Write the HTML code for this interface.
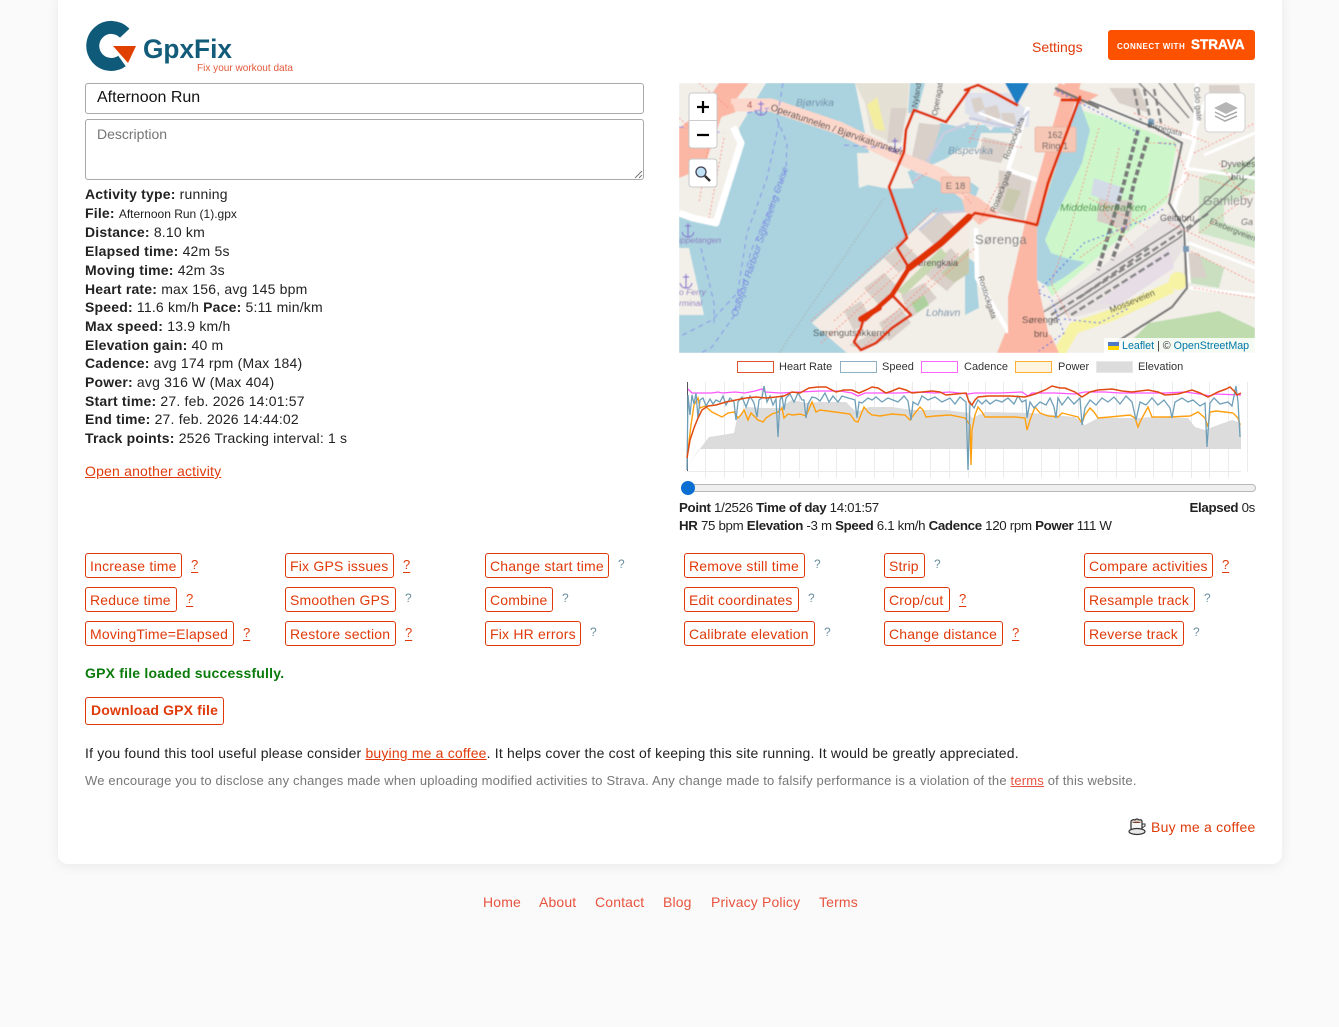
<!DOCTYPE html>
<html lang="en"><head><meta charset="utf-8"><title>GpxFix</title>
<style>
html,body{margin:0;padding:0;background:#fafafa}
body{width:1339px;height:1027px;position:relative;overflow:hidden;font-family:"Liberation Sans",Arial,sans-serif;font-size:14px;color:#222}
#card{position:absolute;left:58px;top:-10px;width:1224px;height:874px;background:#fff;border-radius:10px;box-shadow:0 2px 12px rgba(0,0,0,.07)}
.a{position:absolute;white-space:nowrap}
.inp{position:absolute;left:85px;width:559px;box-sizing:border-box;border:1px solid #a9a9a9;border-radius:3px;background:#fff}
#info{left:85px;top:185px;line-height:18.7px;letter-spacing:.19px}
#info b{color:#222}
.r{color:#e03a0a}
.btn{position:absolute;box-sizing:border-box;height:25px;border:1px solid #e03a0a;border-radius:3px;color:#e03a0a;line-height:24px;padding-left:4px;white-space:nowrap;letter-spacing:.2px;background:#fff}
.q{position:absolute;font-size:12px;line-height:14px;color:#6a8fa0}
.qr{position:absolute;font-size:13px;line-height:15px;color:#e03a0a;text-decoration:underline;text-underline-offset:3px}
.f{position:absolute;top:893px;color:#e8533f;line-height:18px;white-space:nowrap;letter-spacing:.15px}
.lg{position:absolute;top:361px;height:9.5px;width:35px;border-width:1.3px;border-style:solid}
.lt{position:absolute;top:360px;font-size:11px;line-height:14px;color:#333;white-space:nowrap}
.pt{left:679px;line-height:18px;font-size:13.3px;letter-spacing:-.32px}
</style></head><body>
<div id="card"></div>

<svg class="a" style="left:80px;top:15px" width="220" height="62" viewBox="80 15 220 62">
<path d="M124.700 33.200A18.500 18.500 0 1 0 122 61" fill="none" stroke="#0f5a78" stroke-width="13"/>
<path d="M113 46L136 46L128 63Z" fill="#e04000"/>
<text x="143" y="58" font-family="Liberation Sans,sans-serif" font-weight="bold" font-size="27" fill="#125c7a" textLength="89" lengthAdjust="spacingAndGlyphs">GpxFix</text>
<text x="197" y="71" font-family="Liberation Sans,sans-serif" font-size="10.5" fill="#e2593a" textLength="96" lengthAdjust="spacingAndGlyphs">Fix your workout data</text>
</svg>

<div class="a r" style="left:1032px;top:38px;line-height:18px">Settings</div>
<div class="a" style="left:1108px;top:30px;width:147px;height:30px;background:#fc5200;border-radius:3px"></div>
<div class="a" style="left:1117px;top:41px;font-size:8px;line-height:11px;font-weight:bold;color:#fff;letter-spacing:.5px">CONNECT WITH</div>
<div class="a" style="left:1191px;top:37px;font-size:13.5px;line-height:16px;font-weight:bold;color:#fff;-webkit-text-stroke:.4px #fff">STRAVA</div>

<div class="inp" style="top:83px;height:31px;padding-left:11px;font-size:16px;line-height:28px;color:#111">Afternoon Run</div>
<div class="inp" style="top:119px;height:61px;padding:5px 11px;line-height:18px;color:#757575">Description
<svg style="position:absolute;right:0;bottom:0" width="9" height="9"><path d="M1 8L8 1M5 8L8 5" stroke="#777" fill="none"/></svg></div>

<div class="a" id="info">
<b>Activity type:</b> running<br>
<b>File:</b> <span style="font-size:12px;letter-spacing:0">Afternoon Run (1).gpx</span><br>
<b>Distance:</b> 8.10 km<br>
<b>Elapsed time:</b> 42m 5s<br>
<b>Moving time:</b> 42m 3s<br>
<b>Heart rate:</b> max 156, avg 145 bpm<br>
<b>Speed:</b> 11.6 km/h <b>Pace:</b> 5:11 min/km<br>
<b>Max speed:</b> 13.9 km/h<br>
<b>Elevation gain:</b> 40 m<br>
<b>Cadence:</b> avg 174 rpm (Max 184)<br>
<b>Power:</b> avg 316 W (Max 404)<br>
<b>Start time:</b> 27. feb. 2026 14:01:57<br>
<b>End time:</b> 27. feb. 2026 14:44:02<br>
<b>Track points:</b> 2526 Tracking interval: 1 s
</div>
<div class="a r" style="left:85px;top:462px;line-height:18px;text-decoration:underline;letter-spacing:.19px">Open another activity</div>

<!-- MAP -->
<svg class="a" style="left:679px;top:83px" width="576" height="270" viewBox="0 0 576 270" font-family="Liberation Sans,sans-serif">
<defs><filter id="bl" x="0" y="0" width="100%" height="100%"><feGaussianBlur stdDeviation=".45"/></filter></defs>
<g filter="url(#bl)">
<rect width="576" height="270" fill="#f2efe9"/>
<!-- water -->
<path fill="#aad3df" d="M87 0L60 45L63 60L38 142L15 135L0 133V165H10L25 232H0V270H170L133 240L190 190L253 130H290L290 100L260 95L230 88L180 105L178 70L190 70L176 0Z"/>
<path fill="#aad3df" d="M231 0H246L238 30H229ZM262 40L310 50L322 35L330 45L348 60L320 75L308 80L303 65L282 65L268 75L230 92L240 55Z"/>
<path fill="#aad3df" d="M286 42H306L312 48L300 60L286 62ZM286 95L300 105L290 130L286 130ZM286 172L296 180L300 225L286 232Z"/>
<!-- beige/land blocks -->
<path fill="#f2efe9" d="M179 100L193 72L225 80L235 105L210 106Z"/>
<path fill="#e5e0d4" d="M176 0H230L228 30L214 60L192 50L186 20Z"/>
<path fill="#d9d0c9" d="M212 25H228L222 60H208Z"/>
<path fill="#f3ee9f" d="M188 22L198 14L206 48L196 46Z"/>
<path fill="#d9d0c9" d="M240 40L262 42L250 80L232 78Z"/>
<path fill="#dfe1eb" d="M286 10H330L350 30V44H310L286 30Z"/>
<!-- peninsula -->
<path fill="#f4ece4" d="M133 240L255 130L290 128V175L184 268L168 270Z"/>
<path fill="#d9d0c9" d="M240 147L262 130L280 148L258 165ZM205 175L225 160L240 175L220 190ZM185 205L205 190L220 205L200 222ZM245 190L272 165L290 185L268 208ZM222 212L245 200L258 215L232 235ZM200 240L222 225L232 240L210 258ZM165 228L182 218L192 235L175 248ZM170 262L195 250L210 255L185 267Z"/>
<path fill="#c8d8b0" d="M218 208L262 165L268 172L225 212Z"/>
<path fill="#add19e" d="M232 220L245 212L250 222L238 230Z"/>
<path fill="#c8c9ac" d="M262 190L290 165V190L275 200Z"/>
<!-- centre-east land -->
<path fill="#f2efe9" d="M302 50H350L345 135L325 200L300 240L300 100L290 90Z"/>
<path fill="#d9d0c9" d="M305 25L318 22L322 35L308 38ZM322 30L335 30L338 42L325 44ZM292 16L302 14L306 26L296 30ZM304 54L330 60L322 80L300 76ZM320 87L353 95L345 137L318 130Z"/>
<path fill="#c9c9af" d="M329 105L342 108L333 130L322 126Z"/>
<!-- park -->
<path fill="#cdf7cb" d="M404 28L499 54L488 118L443 154L400 190L373 213L360 190L370 100Z"/>
<!-- lake -->
<path fill="#aad3df" d="M399 14L411 47L403 80L386 114L373 140L366 157L372 170L390 176L406 179L386 194L369 204L358 197V144Z"/>
<!-- castle ruin -->
<path fill="#d5cdc6" d="M420 115L455 118L450 148L418 138Z"/>
<path fill="#d3dbe6" d="M415 95L445 105L440 122L412 112Z"/>
<!-- rail yard -->
<path fill="#e8e3e2" d="M493 127L509 157L493 184L433 224L396 234L363 227L419 187Z"/>
<path fill="#e6dde6" d="M455 190L490 165L495 185L440 222L420 220Z"/>
<!-- east land -->
<path fill="#cfe6c8" d="M520 95L576 75V165L520 150Z"/>
<path fill="#f2efe9" d="M545 120L576 110V150L545 140Z"/>
<path fill="#c9dfc0" d="M515 170L545 185L540 205L510 200Z"/>
<path fill="#bedcae" d="M440 270L470 240L540 228L576 245V270Z"/>
<path fill="#f2efe9" d="M408 0H576V60L520 90L499 60L410 25Z"/>
<path fill="#d9d0c9" d="M530 2H560L565 30L530 35ZM430 5H460L470 30L440 20ZM505 170H520L528 195H505Z"/>
<g fill="none" stroke="#6e6e6e" stroke-width="1.6" opacity=".8">
<path d="M460 0L500 40M480 0L510 35M495 0L515 30"/>
<path d="M363 230L499 144L576 74"/><path d="M372 238L500 155L576 88"/>
</g>
<g fill="none" stroke="#777" stroke-width="2.600" stroke-dasharray="7 3" opacity=".85">
<path d="M372 232L470 170L530 130"/><path d="M392 232L490 170"/><path d="M400 215L470 165"/><path d="M455 6L462 40M465 6L472 40M475 6L482 40"/>
</g>
<g fill="none" stroke="#7a7a7a" stroke-width="4" stroke-dasharray="6 2.500">
<path d="M459 47L445 100L430 150L419 187"/>
<path d="M469 54L455 100L445 145L433 177"/>
</g>
<!-- yellow road -->
<path fill="none" stroke="#f7f3a4" stroke-width="12" d="M380 270L395 245L433 232L493 204"/>
<circle cx="499" cy="198" r="9" fill="#f7f3a4"/>
<!-- white roads -->
<g fill="none" stroke="#fff" stroke-linejoin="round">
<path stroke-width="7" d="M54 44L62 60L37 140L14 135L0 130"/>
<path stroke-width="4" d="M400 14L476 45L512 55L530 10"/>
<path stroke-width="4.5" d="M349 24L329 87M329 87L358 97"/>
<path stroke-width="4" d="M518 0L515 60L495 125L505 145L510 200"/>
<path stroke-width="4.500" d="M297 145L298 195L330 250"/>
<path stroke-width="3" d="M525 72L576 50M505 85L576 95M510 160L576 185M510 205L576 212"/>
<path stroke-width="2.5" d="M300 30L340 45"/>
</g>
<g fill="none" stroke="#777" stroke-width="2.200"><path d="M400 14L476 45L503 60L490 120L505 145L508 205L493 224L436 260"/></g>
<path fill="none" stroke="#c9cde0" stroke-width="2.600" d="M235 100L265 50L290 40M240 147L260 130L290 128M290 35L335 45L350 28"/>
<!-- salmon roads -->
<path fill="#fbb7a4" d="M386 0L402 0L358 144L358 197L373 267L329 270L329 214L346 140Z"/>
<path fill="#fbb7a4" d="M0 95L25 85L42 35L70 0H40L20 30L0 45Z"/>
<path fill="#fbb7a4" d="M380 0L420 12L402 22L374 12Z"/>
<path fill="#fbb7a4" d="M326 250L372 252L380 270H318Z"/>
<path fill="#fbc9ba" d="M280 105L300 115L320 130L300 142L286 128Z"/>
<path fill="none" stroke="#fcd7cb" stroke-width="13" d="M52 22L92 22L160 45L228 78L262 92L288 112"/>
<path fill="none" stroke="#fbb7a4" stroke-width="9" d="M15 40L40 30L55 25"/>
<!-- rail -->
<path fill="none" stroke="#777" stroke-width="2.500" d="M376 5L420 25"/>
<!-- footways -->
<g fill="none" stroke="#fa8072" stroke-width="1" stroke-dasharray="2 2" opacity=".85">
<path d="M0 35L30 60L20 120M45 55L30 135M20 0L50 25"/>
<path d="M132 238L258 125M142 260L220 190M180 268L296 165M233 100L248 90M270 95L292 120M155 238L235 165M205 240L280 170"/>
<path d="M290 55L345 65M320 100L300 140M300 40L290 60M420 45L390 150L372 200L390 235M440 65L425 130L455 165M470 60L495 60L510 95L480 120L400 175M410 115L470 145"/>
<path d="M515 70L576 40M505 90L576 110M490 140L576 180M505 165L576 200M515 205L576 215M455 30L530 60M520 150L560 120M540 80L570 120"/>
</g>
<!-- blue routes -->
<g fill="none" stroke="#8890e8" stroke-width="1" stroke-dasharray="5 4">
<path d="M104 0L98 36L108 60L107 87L72 168L63 205L33 237L0 254M100 40L88 95L68 150L55 233L33 264L22 270M22 165L35 220V240"/>
<path d="M68 30L90 25M165 62L220 66M0 44L45 50"/>
</g>
<g fill="none" stroke="#4f6de0" stroke-width="1.2" stroke-dasharray="2 3">
<path d="M378 8L460 50M480 60L500 62M360 208L405 160L470 135L486 125M360 210L372 215L385 250L360 268M385 236L420 240L450 225"/>
</g>
<path fill="none" stroke="#aaa" stroke-width="1" stroke-dasharray="1.500 2" d="M205 115L100 270"/>
<rect x="469" y="36" width="6" height="6" fill="#7ba4c0"/><rect x="504" y="163" width="6" height="6" fill="#7a9bb5"/>
<!-- anchors -->
<g fill="none" stroke="#8875d0" stroke-width="1.200">
<path d="M82 18V32M79 21H85M76 27Q77 32 82 32Q87 32 88 27"/>
<path d="M216 55V69M213 58H219M210 64Q211 69 216 69Q221 69 222 64"/>
<path d="M9 140V154M6 143H12M3 149Q4 154 9 154Q14 154 15 149"/>
<path d="M7 191V205M4 194H10M1 200Q2 205 7 205Q12 205 13 200"/>
</g>
<!-- labels -->
<g font-size="10">
<text x="117" y="23" font-style="italic" fill="#6f8fa8" font-size="10.500">Bjørvika</text>
<text x="269" y="71" font-style="italic" fill="#6f8fa8" font-size="10.500">Bispevika</text>
<text x="247" y="233" font-style="italic" fill="#6f8fa8" font-size="10.500">Lohavn</text>
<text x="91" y="27" fill="#333" font-size="9.500" transform="rotate(19 91 27)">Operatunnelen / Bjørvikatunnelen</text>
<text x="0" y="160" font-style="italic" fill="#8a6fc0" font-size="8.500">ippetangen</text>
<text x="0" y="212" font-style="italic" fill="#8a6fc0" font-size="8.500">o Ferry</text>
<text x="0" y="223" font-style="italic" fill="#8a6fc0" font-size="8.500">rminal</text>
<text x="58" y="234" font-style="italic" fill="#6f7fe0" font-size="9.500" transform="rotate(-71 58 234)">Oslofjord Harbour Sightseeing Cruise</text>
<text x="233" y="183" fill="#333" font-size="9">Sørengkaia</text>
<text x="134" y="253" fill="#333" font-size="9.500">Sørengutstikkeren</text>
<text x="296" y="161" fill="#777" font-size="13" letter-spacing=".3">Sørenga</text>
<text x="381" y="128" font-style="italic" fill="#2e8b2e" font-size="10.500">Middelalderparken</text>
<text x="524" y="122" fill="#8a8a8a" font-size="12.500">Gamleby</text>
<text x="481" y="138" fill="#333" font-size="9">Geitabru</text>
<text x="343" y="240" fill="#333" font-size="9.500">Sørenga</text>
<text x="355" y="254" fill="#333" font-size="9.500">bru</text>
<text x="542" y="84" fill="#333" font-size="9">Dyvekes</text>
<text x="552" y="97" fill="#333" font-size="9">bru</text>
<text x="432" y="230" fill="#333" font-size="9" transform="rotate(-22 432 230)">Mosseveien</text>
<text x="468" y="44" fill="#333" font-size="8" transform="rotate(15 468 44)">Bispegata</text>
<text x="530" y="140" fill="#444" font-size="8" transform="rotate(22 530 140)">Ekebergveien</text>
<text x="329" y="77" fill="#333" font-size="8" transform="rotate(-68 329 77)">Rostockgata</text>
<text x="316" y="130" fill="#333" font-size="8" transform="rotate(-68 316 130)">Rostockgata</text>
<text x="299" y="194" fill="#333" font-size="8" transform="rotate(72 299 194)">Rostockgata</text>
<text x="238" y="25" fill="#333" font-size="8" transform="rotate(-80 238 25)">Nylandsveien</text>
<text x="258" y="33" fill="#333" font-size="8" transform="rotate(-80 258 33)">Operagata</text>
<text x="515" y="4" fill="#333" font-size="8" transform="rotate(85 515 4)">Oslo gate</text>
<text x="562" y="142" fill="#555" font-size="9" font-style="italic">Ga</text>
<text x="68" y="25" fill="#a33" font-size="9.500">4</text>
</g>
<g><rect x="262" y="94" width="29" height="16" rx="2" fill="#f7c7b6" stroke="#e9b1a0" stroke-width=".7"/><text x="276.500" y="106" text-anchor="middle" font-size="9.500" fill="#555">E 18</text></g>
<g><rect x="356" y="44" width="41" height="25" rx="2" fill="#f7c7b6" stroke="#e9b1a0" stroke-width=".7"/><text x="376" y="55" text-anchor="middle" font-size="9" fill="#555">162</text><text x="376" y="66" text-anchor="middle" font-size="9" fill="#555">Ring 1</text></g>
<!-- marker -->
<path d="M326 0H350L338 22Z" fill="#1f7fc4"/>
<!-- track -->
<g fill="none" stroke="#e03000" stroke-linejoin="round" stroke-linecap="round">
<path stroke-width="2.800" d="M286 7L299 2L316 10L338 22M383 17H401"/>
<path stroke-width="2.800" d="M290 7L267 39L235 27L227 47L225 69L210 104L228 155L218 165L230 185"/>
<path stroke-width="2.800" d="M213 212L232 232L213 245L197 260L182 267L175 259L182 245L184 238"/>
<path stroke-width="2.800" d="M286 139L296 130L346 139L358 142L369 100L401 14"/>
<path stroke-width="5" d="M186 236L213 212L230 185"/>
<path stroke-width="7" d="M230 185L262 160L290 134"/>
<path stroke-width="6" d="M182 236L200 225"/>
<path stroke-width="5" d="M280 142L290 135"/>
</g>
</g>
<!-- attribution -->
<rect x="425" y="255" width="151" height="15" fill="#fff" opacity=".85"/>
<rect x="429" y="259" width="11" height="4" fill="#4d78c8"/><rect x="429" y="263" width="11" height="4" fill="#ffd500"/>
<text x="443" y="266" font-size="10.700" fill="#333"><tspan fill="#0078a8">Leaflet</tspan> | © <tspan fill="#0078a8">OpenStreetMap</tspan></text>
<!-- controls -->
<rect x="10" y="10" width="28" height="55" rx="3" fill="#fff" stroke="#c8c8c8"/><path d="M10 37.500H38" stroke="#ccc"/>
<path d="M18 24H30M24 18V30M18 52H30" stroke="#000" stroke-width="2.200"/>
<rect x="10" y="76" width="28" height="28" rx="3" fill="#fff" stroke="#c8c8c8"/>
<circle cx="22" cy="89" r="5" fill="#bfe0f5" stroke="#445" stroke-width="1.300"/><path d="M26 93L31 98" stroke="#333" stroke-width="2.500"/>
<rect x="526" y="10" width="40" height="39" rx="4" fill="#fff" stroke="#d0d0d0"/>
<path d="M536 33L546 38L558 33M536 29L546 34L558 29" fill="none" stroke="#aaa" stroke-width="1.500"/>
<path d="M535 25L547 19L559 25L547 31Z" fill="#b5b5b5"/>
</svg>

<!-- legend -->
<div class="lg" style="left:737px;border-color:#e0532f;background:#fff"></div><div class="lt" style="left:779px">Heart Rate</div>
<div class="lg" style="left:840px;border-color:#8fb0c4;background:#fff"></div><div class="lt" style="left:882px">Speed</div>
<div class="lg" style="left:921px;border-color:#ff66ff;background:#fff"></div><div class="lt" style="left:964px">Cadence</div>
<div class="lg" style="left:1015px;border-color:#ffae34;background:#fff4e0"></div><div class="lt" style="left:1058px">Power</div>
<div class="lg" style="left:1096px;border-color:#e8e8e8;background:#dcdcdc"></div><div class="lt" style="left:1138px">Elevation</div>

<!-- chart -->
<svg class="a" style="left:680px;top:378px" width="575" height="100" viewBox="680 378 575 100">
<g stroke="#ebebeb" stroke-width="1">
<path d="M705.500 382V478M724.500 382V478M743.500 382V478M761.500 382V478M780.500 382V478M799.500 382V478M818.500 382V478M836.500 382V478M855.500 382V478M874.500 382V478M893.500 382V478M912.500 382V478M930.500 382V478M949.500 382V478M968.500 382V478M985.500 382V478M1003.500 382V478M1022.500 382V478M1041.500 382V478M1059.500 382V478M1078.500 382V478M1097.500 382V478M1116.500 382V478M1135.500 382V478M1153.500 382V478M1172.500 382V478M1191.500 382V478M1209.500 382V478M1228.500 382V478M1247.500 382V472"/>
<path d="M687 471.500H1241"/>
</g>
<path d="M687.500 382V471" stroke="#555" stroke-width="1"/>
<path fill="#dcdcdc" d="M687 467L699 450L709 437L722 435L734 433L737 418L746 407L762 408L779 408L792 400L806 403L819 402L846 402L856 412L869 407L892 407L912 410L946 410L969 413L972 418L985 412L1032 413L1075 417L1085 425L1098 418L1138 418L1152 417L1188 418L1195 427L1205 430L1218 425L1232 420L1241 423V449H699Z"/>
<path fill="none" stroke="#ff55ff" stroke-width="1.300" d="M688 389L692 393L700 393L712 393L718 392L722 393L735 392L745 393L755 391L762 389L765 392L780 393L800 392L820 391L840 391L852 393L858 396L865 393L880 393L900 393L918 392L935 393L950 392L968 394L975 393L1000 393L1022 392L1028 396L1032 393L1055 393L1075 394L1085 392L1105 392L1120 393L1150 393L1165 393L1185 392L1200 394L1210 396L1215 394L1241 395"/>
<path fill="none" stroke="#ffa010" stroke-width="1.400" d="M688 450L691 425L694 405L698 398L700 408L705 406L712 412L722 417L728 413L734 412L738 418L741 415L744 410L748 420L751 413L758 420L763 422L766 418L772 414L778 412L782 408L784 418L788 414L793 415L800 414L806 416L812 402L816 412L820 410L835 412L850 414L855 421L858 422L864 407L868 412L872 415L880 416L892 414L905 415L910 420L915 413L920 407L923 410L926 417L935 416L950 415L965 418L970 425L971 465L972 430L975 415L978 407L982 412L985 417L1000 417L1015 417L1025 418L1027 430L1030 420L1035 407L1040 413L1048 416L1058 417L1062 413L1070 415L1078 417L1082 423L1085 415L1090 408L1094 412L1098 418L1110 417L1130 415L1135 418L1138 427L1141 420L1148 407L1152 417L1170 417L1190 416L1198 412L1205 418L1208 427L1210 412L1216 411L1225 412L1233 413L1238 418L1240 425"/>
<path fill="none" stroke="#6f9fb8" stroke-width="1.300" d="M687 470L688 395L690 415L692 395L694 404L696 393L698 418L700 400L703 398L706 406L710 399L713 404L716 400L720 402L723 396L726 405L730 398L734 402L736 420L738 402L742 397L746 407L750 396L754 403L757 417L759 400L762 398L764 386L767 402L770 396L773 405L776 399L778 437L780 400L782 396L784 410L786 398L790 394L794 402L798 393L802 400L804 400L806 418L808 404L812 397L816 398L820 401L825 393L829 402L833 396L838 402L842 396L848 398L852 399L855 400L857 418L859 402L862 403L868 398L872 400L876 397L882 402L888 398L893 400L898 402L904 396L908 401L911 420L913 402L918 405L922 396L928 400L935 397L942 402L950 398L955 404L960 397L966 402L968 470L970 402L974 408L978 400L982 404L986 400L990 404L996 400L1002 402L1008 398L1014 404L1018 396L1022 402L1026 400L1027 418L1030 402L1034 408L1040 402L1046 405L1050 398L1054 407L1056 418L1058 398L1062 405L1068 397L1074 404L1080 398L1082 425L1085 408L1090 400L1096 405L1102 398L1108 402L1114 397L1120 404L1126 396L1132 402L1136 420L1140 402L1146 405L1152 398L1158 405L1164 400L1170 408L1172 418L1175 402L1182 398L1188 402L1193 400L1200 406L1205 403L1207 447L1210 403L1214 398L1220 404L1228 402L1232 406L1236 386L1238 402L1240 437"/>
<path fill="none" stroke="#e04a10" stroke-width="1.500" d="M687 458L690 440L694 428L698 418L702 410L708 406L716 405L726 402L736 400L746 398L756 397L766 398L776 397L784 396L792 392L800 393L809 388L818 387L826 387L832 390L836 392L844 390L852 390L859 393L866 390L872 387L878 388L886 393L892 391L899 388L906 390L912 393L922 392L932 391L940 392L946 395L956 394L966 393L969 402L972 405L975 400L978 397L988 396L998 396L1010 396L1025 397L1035 394L1045 390L1052 386L1060 388L1065 388L1075 392L1082 397L1090 392L1098 390L1112 389L1122 391L1132 392L1148 390L1158 392L1165 395L1178 394L1192 390L1200 393L1208 397L1218 392L1226 389L1230 387L1235 392L1237 395L1241 393"/>
</svg>

<!-- slider -->
<div class="a" style="left:683px;top:484px;width:573px;height:8px;box-sizing:border-box;background:#efefef;border:1px solid #b8b8b8;border-radius:4px"></div>
<div class="a" style="left:681px;top:481px;width:14px;height:14px;background:#0a6fd0;border-radius:50%"></div>

<div class="a pt" style="top:499px"><b>Point</b> 1/2526 <b>Time of day</b> 14:01:57</div>
<div class="a pt" style="left:auto;right:84px;top:499px"><b>Elapsed</b> 0s</div>
<div class="a pt" style="top:517px"><b>HR</b> 75 bpm <b>Elevation</b> -3 m <b>Speed</b> 6.1 km/h <b>Cadence</b> 120 rpm <b>Power</b> 111 W</div>

<!-- buttons -->
<div class="btn" style="left:85px;top:553px;width:97px">Increase time</div><div class="qr" style="left:191px;top:557px">?</div>
<div class="btn" style="left:85px;top:587px;width:92px">Reduce time</div><div class="qr" style="left:186px;top:591px">?</div>
<div class="btn" style="left:85px;top:621px;width:149px">MovingTime=Elapsed</div><div class="qr" style="left:243px;top:625px">?</div>
<div class="btn" style="left:285px;top:553px;width:109px">Fix GPS issues</div><div class="qr" style="left:403px;top:557px">?</div>
<div class="btn" style="left:285px;top:587px;width:111px">Smoothen GPS</div><div class="q" style="left:405px;top:591px">?</div>
<div class="btn" style="left:285px;top:621px;width:111px">Restore section</div><div class="qr" style="left:405px;top:625px">?</div>
<div class="btn" style="left:485px;top:553px;width:124px">Change start time</div><div class="q" style="left:618px;top:557px">?</div>
<div class="btn" style="left:485px;top:587px;width:68px">Combine</div><div class="q" style="left:562px;top:591px">?</div>
<div class="btn" style="left:485px;top:621px;width:96px">Fix HR errors</div><div class="q" style="left:590px;top:625px">?</div>
<div class="btn" style="left:684px;top:553px;width:121px">Remove still time</div><div class="q" style="left:814px;top:557px">?</div>
<div class="btn" style="left:684px;top:587px;width:115px">Edit coordinates</div><div class="q" style="left:808px;top:591px">?</div>
<div class="btn" style="left:684px;top:621px;width:131px">Calibrate elevation</div><div class="q" style="left:824px;top:625px">?</div>
<div class="btn" style="left:884px;top:553px;width:41px">Strip</div><div class="q" style="left:934px;top:557px">?</div>
<div class="btn" style="left:884px;top:587px;width:66px">Crop/cut</div><div class="qr" style="left:959px;top:591px">?</div>
<div class="btn" style="left:884px;top:621px;width:119px">Change distance</div><div class="qr" style="left:1012px;top:625px">?</div>
<div class="btn" style="left:1084px;top:553px;width:129px">Compare activities</div><div class="qr" style="left:1222px;top:557px">?</div>
<div class="btn" style="left:1084px;top:587px;width:111px">Resample track</div><div class="q" style="left:1204px;top:591px">?</div>
<div class="btn" style="left:1084px;top:621px;width:100px">Reverse track</div><div class="q" style="left:1193px;top:625px">?</div>

<div class="a" style="left:85px;top:664px;line-height:18px;font-weight:bold;color:#0a7a0a;letter-spacing:.2px">GPX file loaded successfully.</div>
<div class="btn" style="left:85px;top:697px;width:139px;height:28px;line-height:25px;padding-left:5px;font-weight:bold;letter-spacing:.15px">Download GPX file</div>
<div class="a" style="left:85px;top:744px;line-height:18px;letter-spacing:.175px">If you found this tool useful please consider <span class="r" style="text-decoration:underline">buying me a coffee</span>. It helps cover the cost of keeping this site running. It would be greatly appreciated.</div>
<div class="a" style="left:85px;top:772px;font-size:13px;line-height:18px;color:#777;letter-spacing:.18px">We encourage you to disclose any changes made when uploading modified activities to Strava. Any change made to falsify performance is a violation of the <span style="color:#e8533f;text-decoration:underline">terms</span> of this website.</div>

<svg class="a" style="left:1128px;top:818px" width="19" height="18" viewBox="0 0 19 18">
<path d="M3 3Q5 1 7 2Q9 0 11 2Q13 1 14 3L14 8H3Z" fill="#d8d0c8" stroke="#333" stroke-width="1.200"/>
<ellipse cx="8.500" cy="5.500" rx="4.500" ry="1.800" fill="#7a3b20"/>
<path d="M3 5V11Q8.500 15 14 11V5" fill="#f4f4f4" stroke="#333" stroke-width="1.200"/>
<path d="M14 6H17V8L14 10" fill="none" stroke="#333"/>
<ellipse cx="9" cy="13.500" rx="8" ry="3" fill="#e8e8e8" stroke="#333" stroke-width="1.200"/>
</svg>
<div class="a r" style="left:1151px;top:818px;line-height:18px;letter-spacing:.24px">Buy me a coffee</div>

<div class="f" style="left:483px">Home</div>
<div class="f" style="left:539px">About</div>
<div class="f" style="left:595px">Contact</div>
<div class="f" style="left:663px">Blog</div>
<div class="f" style="left:711px">Privacy Policy</div>
<div class="f" style="left:819px">Terms</div>
</body></html>
